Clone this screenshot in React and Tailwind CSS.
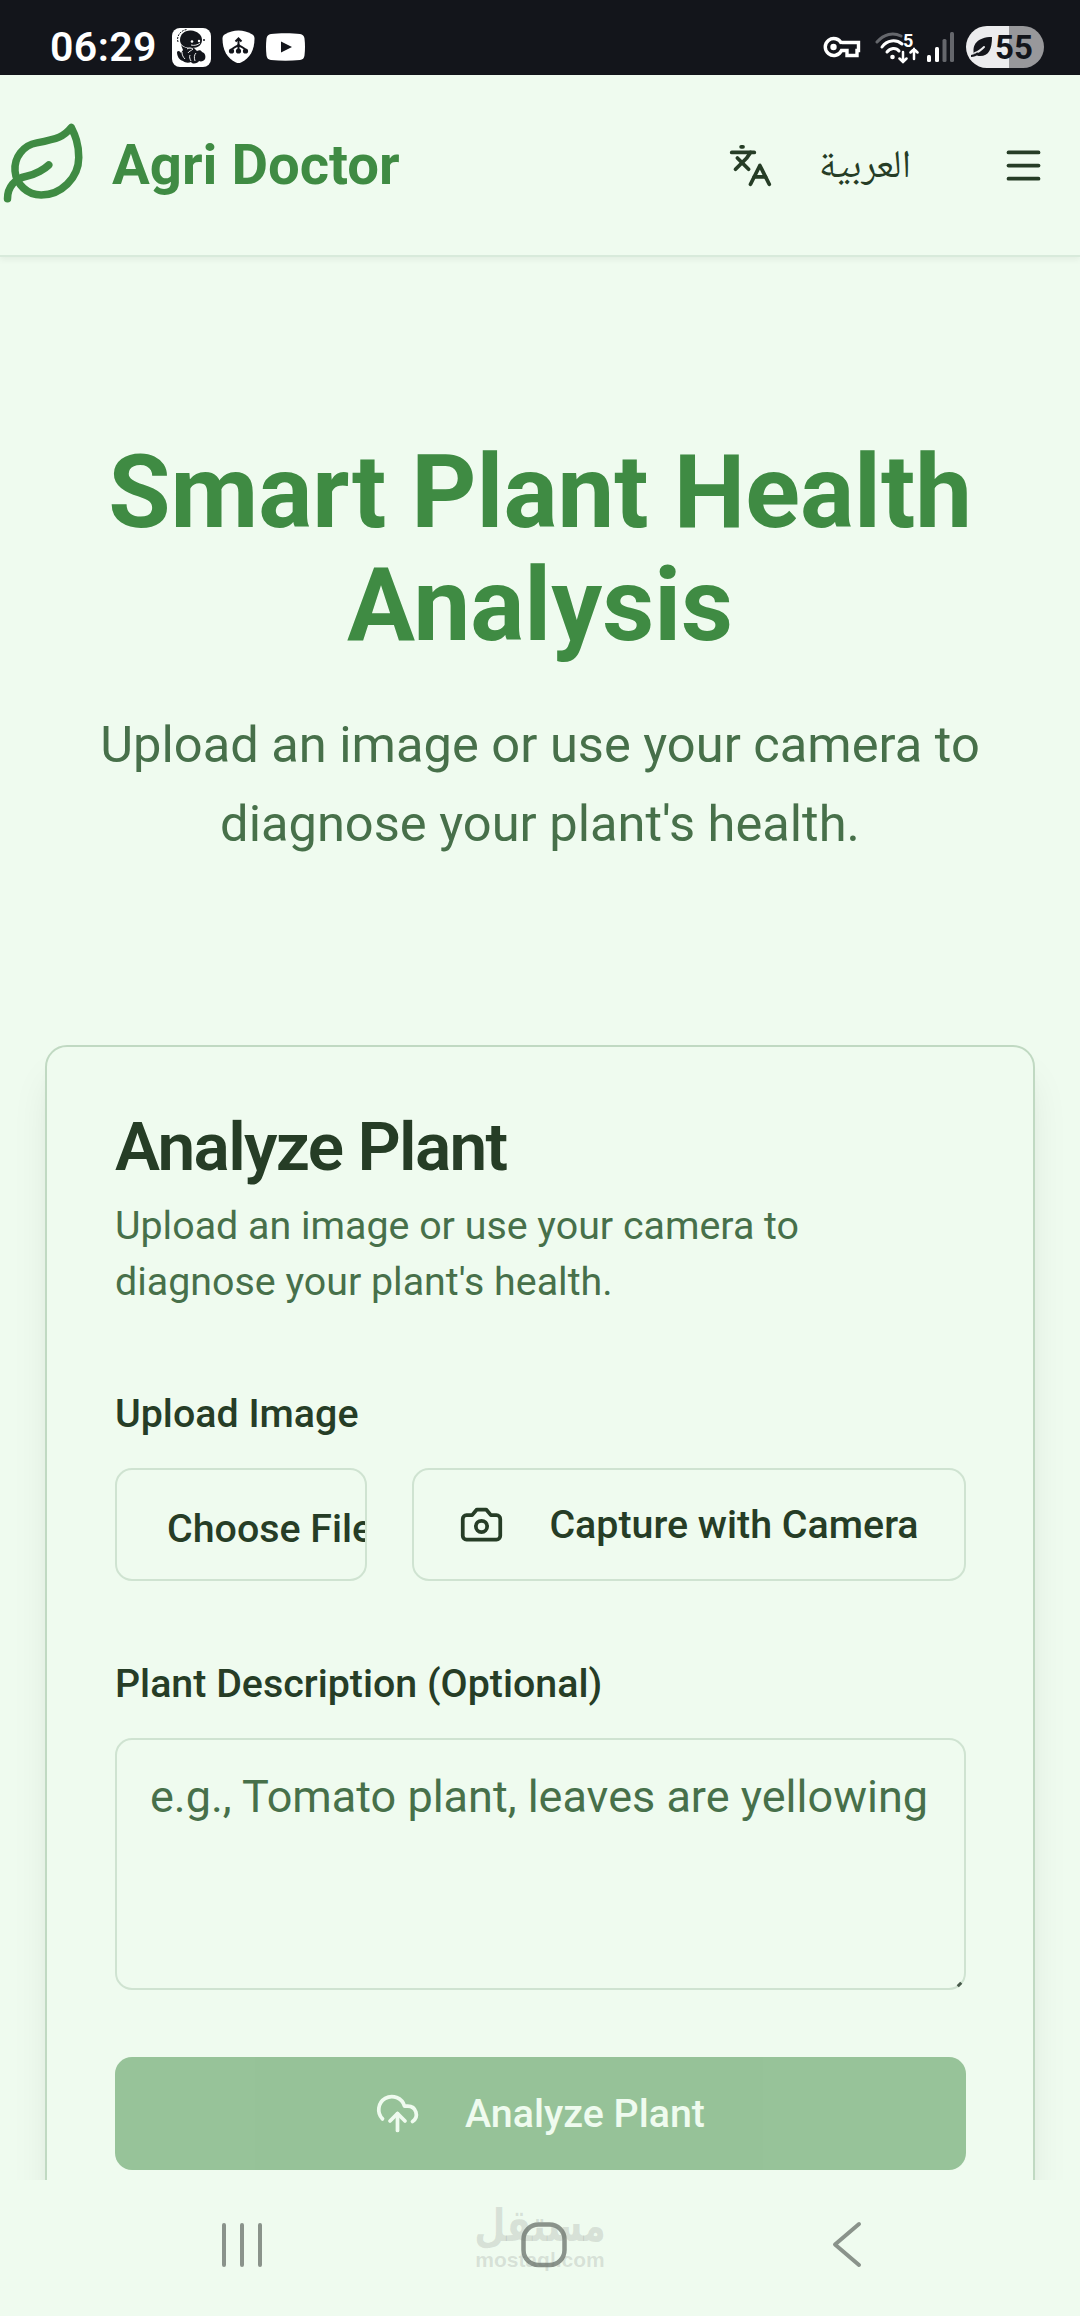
import React, { useState } from "react";
import { Leaf, Languages, Menu } from "lucide-react";

function App() {
  return (
    <div className="w-[1080px] h-[2316px] flex flex-col overflow-hidden bg-[#effbef] font-[Roboto,sans-serif] text-[#263d26]">
      <StatusBar />
      <Header />
      <main className="flex-1 min-h-0 overflow-hidden">
        <Hero />
        <AnalyzeCard />
      </main>
      <NavigationBar />
    </div>
  );
}

const StatusBar = () => (
  <div className="h-[75px] shrink-0 bg-[#13151b] flex justify-between pl-[50px] pr-9 pt-5">
    <div className="flex items-center h-[54px]">
      <span className="w-[122px] text-[41px] leading-none font-semibold text-white tracking-[0.4px] whitespace-nowrap">
        06:29
      </span>
      <DinoIcon />
      <ShieldIcon />
      <VideoIcon />
    </div>
    <div className="flex items-center h-[54px]">
      <KeyIcon />
      <WifiIcon />
      <SignalIcon />
      {/* Battery pill, filled up to 55% */}
      <div className="flex items-center w-[78px] h-[42px] rounded-full bg-linear-to-r from-[#ececee] from-55% to-[#98989b] to-55% pl-[5px] text-[#13151b]">
        <svg width="22" height="22" viewBox="0 0 22 22">
          <path
            d="M3 18C1 9 6 1 21 1c0 12-3 19-12 19-2 0-4-.6-5-1.500z"
            fill="#13151b"
          />
          <path
            d="M4 17c4-1 6-3 9-6"
            fill="none"
            stroke="#ececee"
            strokeWidth="2"
            strokeLinecap="round"
          />
          <path d="M0 20c3 0 5-1 7-3" fill="none" stroke="#13151b" strokeWidth="2" />
        </svg>
        <span className="ml-[2px] text-[33px] leading-none font-bold">55</span>
      </div>
    </div>
  </div>
);

const Header = () => (
  <header className="relative h-[182px] shrink-0 flex items-center justify-between border-b-2 border-[#d8eadb] shadow-[0_3px_6px_rgba(0,0,0,0.05)]">
    <div className="flex items-center">
      <Leaf className="w-[90px] h-[90px] text-[#3f8b43]" />
      <span className="ml-[22px] text-[56.25px] leading-none font-bold text-[#3f8b43]">
        Agri Doctor
      </span>
    </div>
    <div className="flex items-center">
      <button className="flex items-center">
        <Languages className="w-[45px] h-[45px]" />
        <span
          dir="rtl"
          lang="ar"
          className="ml-[46px] mt-[7px] w-[92px] text-[39px] leading-none whitespace-nowrap font-['Noto_Naskh_Arabic','Noto_Sans_Arabic','DejaVu_Sans',sans-serif]"
        >
          العربية
        </span>
      </button>
      <button className="ml-[56px] w-[113px] h-[112px] flex items-center justify-center">
        <Menu className="w-[45px] h-[45px]" />
      </button>
    </div>
  </header>
);

const Hero = () => (
  <section className="pt-[180px] px-[45px] text-center">
    <h1 className="text-[101.25px] leading-[112.5px] font-bold text-[#3f8b43]">
      Smart Plant Health Analysis
    </h1>
    <p className="mt-[44px] text-[50.625px] leading-[78.75px] text-[#47704a]">
      Upload an image or use your camera to diagnose your plant's health.
    </p>
  </section>
);

function AnalyzeCard() {
  const [description, setDescription] = useState("");

  return (
    <section className="mt-[181px] mx-[45px] h-[1300px] rounded-[22px] border-2 border-[#c0d9c2] bg-[#effbef] pl-[68px] pr-[67px] pt-[66px] shadow-[0_28px_42px_-8px_rgba(0,0,0,0.1),0_11px_17px_-11px_rgba(0,0,0,0.1)]">
      <h2 className="text-[67.5px] leading-none font-semibold tracking-[-0.025em]">
        Analyze Plant
      </h2>
      <p className="mt-[18px] text-[39.375px] leading-[56.25px] text-[#47704a]">
        Upload an image or use your camera to diagnose your plant's health.
      </p>

      <FieldLabel className="mt-[67.5px]">Upload Image</FieldLabel>
      <div className="mt-[22.5px] flex gap-[45px]">
        <button className="w-[252px] h-[113px] shrink-0 overflow-hidden rounded-[17px] border-2 border-[#cfe3d1] pl-[50px] pt-[8px] text-left text-[39.375px] font-medium whitespace-nowrap">
          Choose File
        </button>
        <button className="flex-1 h-[113px] flex items-center justify-center rounded-[17px] border-2 border-[#cfe3d1] text-[39.375px] font-medium whitespace-nowrap">
          <CameraIcon />
          Capture with Camera
        </button>
      </div>

      <FieldLabel className="mt-[67px]">Plant Description (Optional)</FieldLabel>
      <div className="relative mt-[22.5px] h-[252px]">
        <textarea
          value={description}
          onChange={(e) => setDescription(e.target.value)}
          placeholder="e.g., Tomato plant, leaves are yellowing"
          className="block w-full h-full resize-none overflow-hidden rounded-[17px] border-2 border-[#cfe3d1] px-[33px] py-[23px] text-[45px] leading-[67.5px] placeholder:text-[#47704a]"
        />
        {/* Resize grip */}
        <span className="absolute right-[4px] bottom-[4px] w-[5px] h-[3px] -rotate-45 bg-[#47594a]" />
      </div>

      <button
        disabled
        className="mt-[67px] w-full h-[113px] flex items-center justify-center rounded-[17px] bg-[#3f8b43] pr-px text-[39.375px] font-medium text-[#effbef] opacity-50"
      >
        <UploadIcon />
        Analyze Plant
      </button>
    </section>
  );
}

const FieldLabel = ({ className, children }) => (
  <div className={`text-[45px] leading-[67.5px] ${className}`}>
    <label className="text-[39.375px] leading-none font-medium">{children}</label>
  </div>
);

const NavigationBar = () => (
  <nav className="relative h-[136px] shrink-0 bg-[#effbef] flex justify-between pl-[220px] pr-[217px] pt-[40px]">
    <svg width="44" height="48" viewBox="0 0 44 48" stroke="#8a938b" strokeWidth="4" strokeLinecap="round">
      <path d="M4 5v40M22 5v40M40 5v40" />
    </svg>
    <svg className="ml-[-6px]" width="50" height="50" viewBox="0 0 50 50" fill="none" stroke="#8a938b" strokeWidth="4.500">
      <rect x="4.500" y="4.500" width="41" height="40.500" rx="15" />
    </svg>
    <svg width="34" height="50" viewBox="0 0 34 50" fill="none" stroke="#8a938b" strokeWidth="4" strokeLinecap="round" strokeLinejoin="round">
      <path d="M30 4 6 24.500 30 45" />
    </svg>
    {/* Watermark over the home button */}
    <div className="absolute left-[470px] top-[26px] w-[140px] flex flex-col items-center text-[#6f756f]/20">
      <span
        dir="rtl"
        lang="ar"
        className="h-[40px] text-[36px] leading-[40px] font-bold whitespace-nowrap scale-y-125 font-['DejaVu_Sans',sans-serif]"
      >
        مستقل
      </span>
      <span className="text-[21px] leading-[28px] font-semibold font-['Liberation_Sans',sans-serif]">
        mostaql.com
      </span>
    </div>
  </nav>
);

const CameraIcon = () => (
  <svg className="mr-[45px] w-[45px] h-[45px]" viewBox="0 0 24 24" fill="none" stroke="currentColor" strokeWidth="2" strokeLinecap="round" strokeLinejoin="round">
    <path d="M14.500 4h-5L7 7H4a2 2 0 0 0-2 2v9a2 2 0 0 0 2 2h16a2 2 0 0 0 2-2V9a2 2 0 0 0-2-2h-3l-2.500-3z" />
    <circle cx="12" cy="13" r="3" />
  </svg>
);

const UploadIcon = () => (
  <svg className="mr-[45px] w-[45px] h-[45px]" viewBox="0 0 24 24" fill="none" stroke="currentColor" strokeWidth="2" strokeLinecap="round" strokeLinejoin="round">
    <path d="M4 14.899A7 7 0 1 1 15.710 8h1.790a4.500 4.500 0 0 1 2.500 8.242" />
    <path d="M12 12v9" />
    <path d="m16 16-4-4-4 4" />
  </svg>
);

const DinoIcon = () => (
  <svg width="39" height="39" viewBox="0 0 39 39">
    <rect width="39" height="39" rx="8" fill="#fff" />
    {/* head */}
    <path
      d="M8 12C8 6 13 2 19 2.500c6 .5 11 4 11 9.500 0 5-4 8-10 8-7 0-12-2.500-12-8z"
      fill="#13151b"
    />
    {/* body and legs */}
    <path
      d="M9 17c3 3 8 4 13 3l3 3c2-1 4-1 5 1 3 1 4 4 3 7-1 2-4 3-6 2-1 2-6 4-8 1-2 1-6 1-8-1-4-1-6-5-6-9 1-2 3-1 4 1l2-3z"
      fill="#13151b"
    />
    <path
      d="M19 17c3 1 7 0 9-2M15 21c3-2 4-1 6 0-2 2-4 2-5 4M18 27c-1 2 0 4 1 6M24 25c-2 2-2 5-1 8M10 24c0 3 1 5 3 7"
      stroke="#fff"
      strokeWidth="0.900"
      fill="none"
    />
    <circle cx="20" cy="13.500" r="1.300" fill="#fff" />
    <circle cx="27" cy="13" r="1.200" fill="#fff" />
    <circle cx="32" cy="12" r="1" fill="#13151b" />
    <path d="M6 14C4 8 9 2 15 1.500" stroke="#13151b" strokeDasharray="2 1" fill="none" />
  </svg>
);

const ShieldIcon = () => (
  <svg className="ml-[11px]" width="33" height="34" viewBox="0 0 33 34">
    <path
      d="M16.500.5c5 0 9 1.500 13 3.500 2 1 3 2 3 4.500C32.500 20 28 28 19 32.500q-2.500 1.200-5 0C5 28 .5 20 .5 8.500.5 6 1.500 5 3.500 4c4-2 8-3.500 13-3.500z"
      fill="#fff"
    />
    <g stroke="#13151b" strokeWidth="2" fill="none">
      <path d="M16.500 21V9M13.500 11.500l3-3 3 3M16.500 14c0 3-7 3-7 7M16.500 14c0 3 7 3 7 7" />
    </g>
    <g fill="#13151b">
      <circle cx="9.500" cy="21" r="2.600" />
      <circle cx="16.500" cy="21" r="2.600" />
      <circle cx="23.500" cy="21" r="2.600" />
    </g>
  </svg>
);

const VideoIcon = () => (
  <svg className="ml-[11px]" width="39" height="28" viewBox="0 0 39 28">
    <path
      d="M5 1C12 0 27 0 34 1q4 .5 4.500 4.500 1 8.500 0 17Q38 26.500 34 27 19.500 28.500 5 27 1 26.500.5 22.500q-1-8.500 0-17Q1 1.500 5 1z"
      fill="#fff"
    />
    <path d="m15 8.500 11 5.500-11 5.500z" fill="#13151b" />
  </svg>
);

const KeyIcon = () => (
  <svg width="38" height="22" viewBox="0 0 38 22" fill="none">
    <path
      d="M18.500 7.500A8.500 8.500 0 1 0 18.500 14.500H24V19.500H34V14.500H35.500V6.500H18.500z"
      stroke="#fff"
      strokeWidth="3.400"
    />
    <circle cx="10.500" cy="11" r="3.200" fill="#fff" />
  </svg>
);

const WifiIcon = () => (
  <svg className="ml-[14px]" width="44" height="33" viewBox="0 0 44 33" fill="none" strokeLinecap="round">
    <g strokeWidth="3">
      <path d="M2 11C9 3 18 1 26 5" stroke="#65676c" />
      <path d="M7 16C12 9 21 8 27 13" stroke="#fff" />
      <path d="M12 21c3-4 9-5 12-1" stroke="#fff" />
    </g>
    <circle cx="17.500" cy="26" r="2.300" fill="#fff" />
    <path d="M28 21v10M24.500 27.500 28 31l3.500-3.500M39 28V18M35.500 21.500 39 18l3.500 3.500" stroke="#fff" strokeWidth="2.500" />
    <text x="28" y="15.500" fill="#fff" fontSize="18" fontWeight="700">
      5
    </text>
  </svg>
);

const SignalIcon = () => (
  <svg className="ml-[8px] mr-[11px]" width="28" height="30" viewBox="0 0 28 30">
    <rect x="0" y="23" width="4" height="7" rx="1.500" fill="#fff" />
    <rect x="8" y="15" width="4" height="15" rx="1.500" fill="#fff" />
    <rect x="15.500" y="7" width="4" height="23" rx="1.500" fill="#65676c" />
    <rect x="23" y="0" width="4" height="30" rx="1.500" fill="#65676c" />
  </svg>
);

export default App;
